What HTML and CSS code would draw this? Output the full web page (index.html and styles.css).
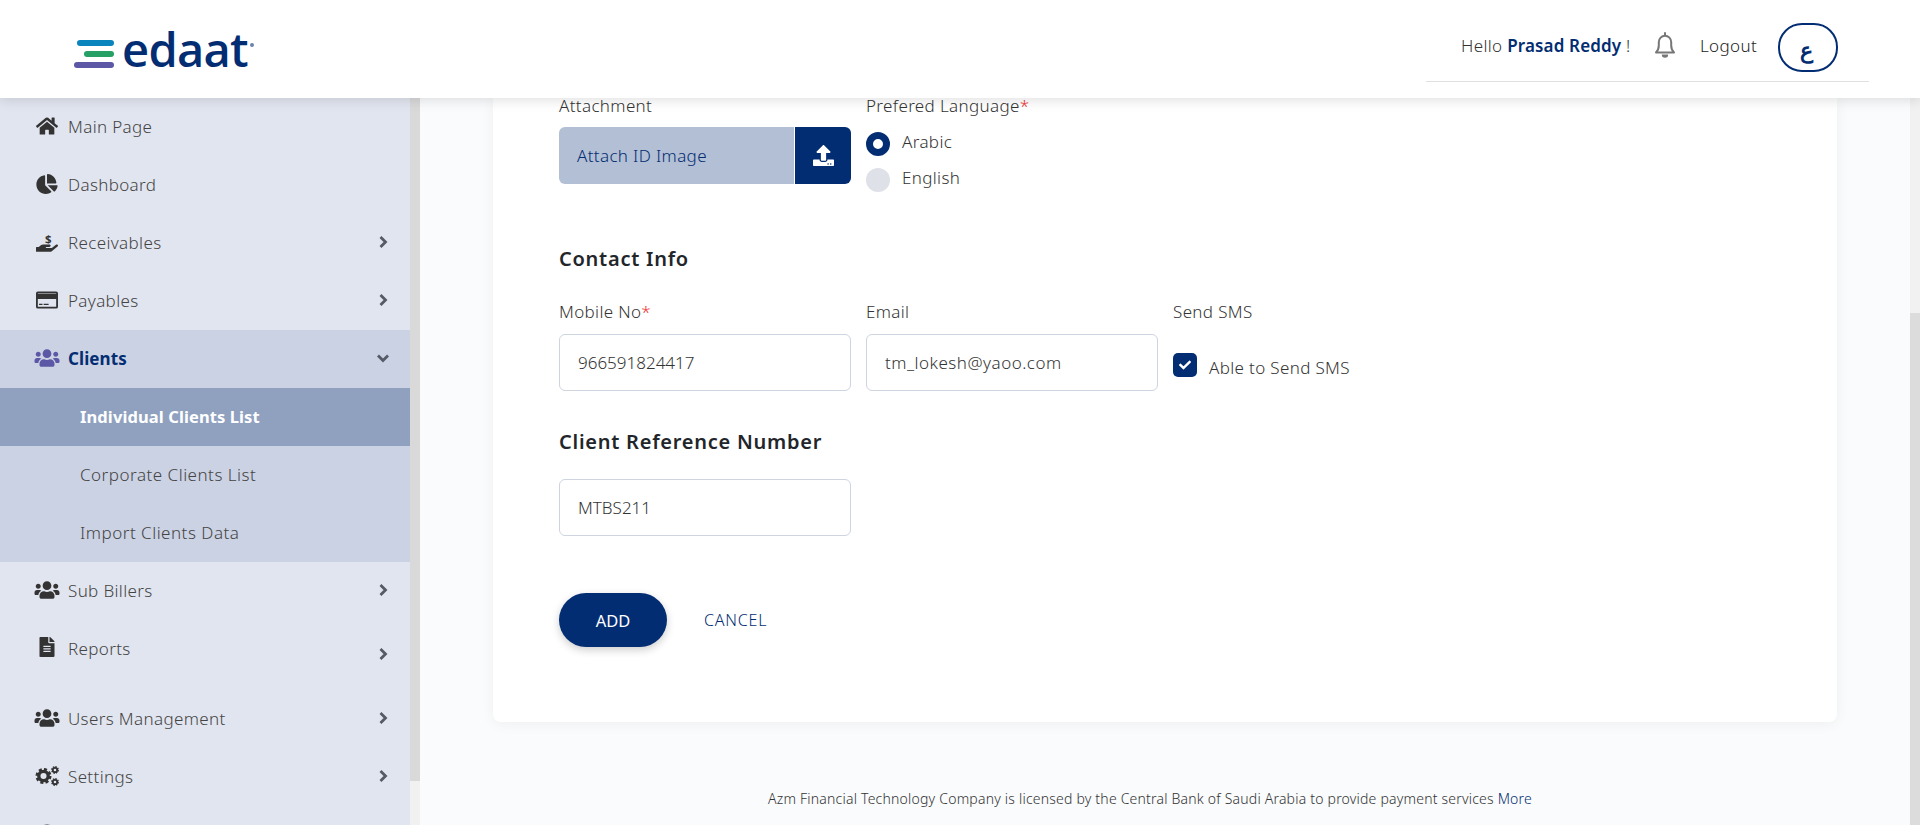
FILE: index.html
```html
<!DOCTYPE html>
<html lang="en">
<head>
<meta charset="utf-8">
<title>edaat</title>
<link rel="stylesheet" href="styles.css">
</head>
<body>
<div class="app">
  <header class="topbar">
    <div class="logo">
      <div class="logo-bars"><i class="bar bar-blue"></i><i class="bar bar-green"></i><i class="bar bar-purple"></i></div>
      <span class="logo-word">edaat</span><i class="logo-dot"></i>
    </div>
    <div class="user-area">
      <span class="hello">Hello <b>Prasad Reddy</b> !</span>
      <svg class="bell" viewBox="0 0 24 26"><path d="M3 20.5c1.8-1.8 2.8-3.4 2.8-7V10a6.2 6.2 0 0 1 12.4 0v3.500c0 3.600 1 5.200 2.800 7z" fill="none" stroke="#777" stroke-width="2" stroke-linejoin="round"/><path d="M12 1v2" stroke="#777" stroke-width="2" stroke-linecap="round"/><path d="M8.800 22.500h6.400a3.200 3.200 0 0 1-6.400 0z" fill="#777"/></svg>
      <span class="logout">Logout</span>
      <button class="lang">ع</button>
    </div>
  </header>
  <div class="body">
    <nav class="sidebar">
      <a class="nav"><svg class="ic" viewBox="0 0 576 512"><path d="M280.37 148.26L96 300.11V464a16 16 0 0 0 16 16l112.06-.29a16 16 0 0 0 15.92-16V368a16 16 0 0 1 16-16h64a16 16 0 0 1 16 16v95.64a16 16 0 0 0 16 16.05L464 480a16 16 0 0 0 16-16V300L295.67 148.26a12.19 12.19 0 0 0-15.3 0zM571.6 251.47L488 182.56V44.05a12 12 0 0 0-12-12h-56a12 12 0 0 0-12 12v72.61L318.47 43a48 48 0 0 0-61 0L4.34 251.47a12 12 0 0 0-1.6 16.9l25.5 31A12 12 0 0 0 45.15 301l235.22-193.74a12.19 12.19 0 0 1 15.3 0L530.9 301a12 12 0 0 0 16.9-1.6l25.5-31a12 12 0 0 0-1.7-16.93z"/></svg><span>Main Page</span></a>
      <a class="nav"><svg class="ic" viewBox="0 0 544 512"><path d="M527.79 288H290.5l158.03 158.03c6.04 6.04 15.98 6.53 22.19.68 38.7-36.46 65.32-85.61 73.13-140.86 1.34-9.46-6.51-17.85-16.06-17.85zm-15.83-64.8C503.72 103.74 408.26 8.28 288.8.04 279.68-.59 272 7.1 272 16.24V240h223.77c9.14 0 16.82-7.68 16.19-16.8zM224 288V50.71c0-9.55-8.39-17.4-17.84-16.06C86.99 51.49-4.1 155.6.14 280.37 4.5 408.51 114.83 513.59 243.03 511.98c50.4-.63 96.97-16.87 135.26-44.03 7.9-5.6 8.42-17.23 1.57-24.08L224 288z"/></svg><span>Dashboard</span></a>
      <a class="nav"><svg class="ic ic-hand" viewBox="0 0 576 512"><path d="M565.3 328.100c-11.800-10.700-30.200-10-42.600 0L430.300 402c-11.300 9.100-25.400 14-40 14H272c-8.800 0-16-7.200-16-16s7.200-16 16-16h78.300c15.900 0 30.700-10.900 33.300-26.600 3.300-20-12.100-37.400-31.600-37.400H192c-27 0-53.100 9.300-74.100 26.300L71.400 384H16c-8.800 0-16 7.200-16 16v96c0 8.800 7.200 16 16 16h356.800c14.500 0 28.600-4.900 40-14l151.200-121c15.200-12.200 16.400-34.800 1.300-48.900z"/><text x="320" y="270" class="dollar">$</text></svg><span>Receivables</span><svg class="chev" viewBox="0 0 10 14"><path d="M2.500 2l5 5-5 5"/></svg></a>
      <a class="nav"><svg class="ic" viewBox="0 0 576 512"><path fill-rule="evenodd" d="M48 32h480a48 48 0 0 1 48 48v352a48 48 0 0 1-48 48H48a48 48 0 0 1-48-48V80a48 48 0 0 1 48-48zM48 72v16h480V72zM48 232v200h480V232zM80 352h90v36H80zM200 352h130v36H200z"/></svg><span>Payables</span><svg class="chev" viewBox="0 0 10 14"><path d="M2.500 2l5 5-5 5"/></svg></a>
      <div class="group">
        <a class="nav nav-open"><svg class="ic ic-users" viewBox="0 0 640 512"><path d="M96 224c35.300 0 64-28.700 64-64s-28.700-64-64-64-64 28.700-64 64 28.700 64 64 64zm448 0c35.300 0 64-28.700 64-64s-28.700-64-64-64-64 28.700-64 64 28.700 64 64 64zm32 32h-64c-17.600 0-33.500 7.100-45.100 18.600 40.300 22.100 68.900 62 75.100 109.400h66c17.700 0 32-14.300 32-32v-32c0-35.300-28.700-64-64-64zm-256 0c61.900 0 112-50.100 112-112S381.900 32 320 32 208 82.100 208 144s50.100 112 112 112zm76.800 32h-8.300c-20.800 10-43.900 16-68.500 16s-47.600-6-68.500-16h-8.300C179.600 288 128 339.600 128 403.200V432c0 26.500 21.500 48 48 48h288c26.500 0 48-21.500 48-48v-28.800c0-63.600-51.600-115.200-115.200-115.200zm-223.700-13.400C161.500 263.100 145.600 256 128 256H64c-35.300 0-64 28.700-64 64v32c0 17.700 14.300 32 32 32h65.900c6.300-47.400 34.900-87.300 75.200-109.400z"/></svg><span>Clients</span><svg class="chev chev-down" viewBox="0 0 14 10"><path d="M2 2.500l5 5 5-5"/></svg></a>
        <a class="sub sub-active">Individual Clients List</a>
        <a class="sub">Corporate Clients List</a>
        <a class="sub">Import Clients Data</a>
      </div>
      <a class="nav"><svg class="ic ic-users" viewBox="0 0 640 512"><path d="M96 224c35.300 0 64-28.700 64-64s-28.700-64-64-64-64 28.700-64 64 28.700 64 64 64zm448 0c35.300 0 64-28.700 64-64s-28.700-64-64-64-64 28.700-64 64 28.700 64 64 64zm32 32h-64c-17.600 0-33.500 7.100-45.100 18.600 40.300 22.100 68.900 62 75.100 109.400h66c17.700 0 32-14.300 32-32v-32c0-35.300-28.700-64-64-64zm-256 0c61.900 0 112-50.100 112-112S381.900 32 320 32 208 82.100 208 144s50.100 112 112 112zm76.800 32h-8.300c-20.800 10-43.900 16-68.500 16s-47.600-6-68.500-16h-8.300C179.600 288 128 339.600 128 403.200V432c0 26.500 21.500 48 48 48h288c26.500 0 48-21.500 48-48v-28.800c0-63.600-51.600-115.200-115.200-115.200zm-223.700-13.400C161.500 263.100 145.600 256 128 256H64c-35.300 0-64 28.700-64 64v32c0 17.700 14.300 32 32 32h65.900c6.300-47.400 34.900-87.300 75.200-109.400z"/></svg><span>Sub Billers</span><svg class="chev" viewBox="0 0 10 14"><path d="M2.500 2l5 5-5 5"/></svg></a>
      <a class="nav nav-tall"><svg class="ic ic-file" viewBox="0 0 384 512"><path d="M224 136V0H24C10.700 0 0 10.700 0 24v464c0 13.300 10.700 24 24 24h336c13.300 0 24-10.700 24-24V160H248c-13.200 0-24-10.800-24-24zm64 236c0 6.600-5.400 12-12 12H108c-6.600 0-12-5.400-12-12v-8c0-6.600 5.400-12 12-12h168c6.600 0 12 5.400 12 12v8zm0-64c0 6.600-5.400 12-12 12H108c-6.600 0-12-5.400-12-12v-8c0-6.600 5.400-12 12-12h168c6.600 0 12 5.400 12 12v8zm0-72v8c0 6.600-5.400 12-12 12H108c-6.600 0-12-5.400-12-12v-8c0-6.600 5.400-12 12-12h168c6.600 0 12 5.400 12 12zm96-114.100v6.100H256V0h6.100c6.400 0 12.500 2.500 17 7l97.900 98c4.500 4.500 7 10.600 7 16.900z"/></svg><span>Reports</span><svg class="chev" viewBox="0 0 10 14"><path d="M2.500 2l5 5-5 5"/></svg></a>
      <a class="nav"><svg class="ic ic-users" viewBox="0 0 640 512"><path d="M96 224c35.300 0 64-28.700 64-64s-28.700-64-64-64-64 28.700-64 64 28.700 64 64 64zm448 0c35.300 0 64-28.700 64-64s-28.700-64-64-64-64 28.700-64 64 28.700 64 64 64zm32 32h-64c-17.600 0-33.500 7.100-45.100 18.600 40.300 22.100 68.900 62 75.100 109.400h66c17.700 0 32-14.300 32-32v-32c0-35.300-28.700-64-64-64zm-256 0c61.900 0 112-50.100 112-112S381.900 32 320 32 208 82.100 208 144s50.100 112 112 112zm76.800 32h-8.300c-20.800 10-43.900 16-68.500 16s-47.600-6-68.500-16h-8.300C179.600 288 128 339.600 128 403.200V432c0 26.500 21.500 48 48 48h288c26.500 0 48-21.500 48-48v-28.800c0-63.600-51.600-115.200-115.200-115.200zm-223.700-13.400C161.500 263.100 145.600 256 128 256H64c-35.300 0-64 28.700-64 64v32c0 17.700 14.300 32 32 32h65.900c6.300-47.400 34.900-87.300 75.200-109.400z"/></svg><span>Users Management</span><svg class="chev" viewBox="0 0 10 14"><path d="M2.500 2l5 5-5 5"/></svg></a>
      <a class="nav"><svg class="ic ic-users" viewBox="0 0 24 20"><circle class="gear-teeth" cx="8.500" cy="10" r="6.300" stroke-width="3.400" stroke-dasharray="2.800 2.100"/><circle class="gear-ring" cx="8.500" cy="10" r="4.700" stroke-width="3.300"/><circle class="gear-ring" cx="20" cy="4" r="2.200" stroke-width="1.800"/><circle class="gear-teeth" cx="20" cy="4" r="3.200" stroke-width="1.400" stroke-dasharray="1.500 1"/><circle class="gear-ring" cx="20" cy="16" r="2.200" stroke-width="1.800"/><circle class="gear-teeth" cx="20" cy="16" r="3.200" stroke-width="1.400" stroke-dasharray="1.500 1"/></svg><span>Settings</span><svg class="chev" viewBox="0 0 10 14"><path d="M2.500 2l5 5-5 5"/></svg></a>
      <a class="nav"><svg class="ic" viewBox="0 0 24 24"><circle cx="12" cy="12" r="10" fill="none" stroke="#333" stroke-width="3"/></svg></a>
    </nav>
    <div class="side-scroll"><i class="side-thumb"></i></div>
    <main class="main">
      <section class="card">
        <div class="row row-top">
          <div class="field">
            <label class="lbl">Attachment</label>
            <div class="attach">
              <span class="attach-text">Attach ID Image</span>
              <span class="attach-btn"><svg class="upload" viewBox="0 0 512 512"><path d="M296 384h-80c-13.300 0-24-10.700-24-24V192h-87.700c-17.800 0-26.700-21.500-14.100-34.100L242.300 5.700c7.500-7.500 19.800-7.500 27.300 0l152.200 152.200c12.600 12.600 3.700 34.100-14.100 34.100H320v168c0 13.300-10.700 24-24 24zm216-8v112c0 13.300-10.700 24-24 24H24c-13.300 0-24-10.700-24-24V376c0-13.300 10.700-24 24-24h136v8c0 30.900 25.100 56 56 56h80c30.900 0 56-25.100 56-56v-8h136c13.300 0 24 10.700 24 24zm-124 88c0-11-9-20-20-20s-20 9-20 20 9 20 20 20 20-9 20-20zm64 0c0-11-9-20-20-20s-20 9-20 20 9 20 20 20 20-9 20-20z"/></svg></span>
            </div>
          </div>
          <div class="field">
            <label class="lbl">Prefered Language<em>*</em></label>
            <div class="radio-row"><i class="radio radio-on"></i><span>Arabic</span></div>
            <div class="radio-row"><i class="radio"></i><span>English</span></div>
          </div>
        </div>
        <h3 class="head head-contact">Contact Info</h3>
        <div class="row">
          <div class="field">
            <label class="lbl lbl-gap">Mobile No<em>*</em></label>
            <input class="input input-tight" value="966591824417">
          </div>
          <div class="field">
            <label class="lbl lbl-gap">Email</label>
            <input class="input input-wide" value="tm_lokesh@yaoo.com">
          </div>
          <div class="field">
            <label class="lbl">Send SMS</label>
            <div class="check-row">
              <i class="check"><svg viewBox="0 0 512 512"><path d="M173.900 439.400l-166.400-166.400c-10-10-10-26.200 0-36.200l36.200-36.200c10-10 26.200-10 36.200 0L192 312.700 432.100 72.600c10-10 26.200-10 36.200 0l36.200 36.200c10 10 10 26.200 0 36.200L210.100 439.400c-10 10-26.200 10-36.200 0z"/></svg></i>
              <span>Able to Send SMS</span>
            </div>
          </div>
        </div>
        <h3 class="head head-ref">Client Reference Number</h3>
        <div class="row">
          <div class="field"><input class="input input-tight" value="MTBS211"></div>
        </div>
        <div class="actions">
          <button class="btn-add">ADD</button>
          <a class="btn-cancel">CANCEL</a>
        </div>
      </section>
      <footer class="foot">Azm Financial Technology Company is licensed by the Central Bank of Saudi Arabia to provide payment services <a>More</a></footer>
    </main>
    <div class="main-scroll"><i class="main-track"></i></div>
  </div>
</div>
</body>
</html>
```
FILE: styles.css
```css
* { box-sizing: border-box; }
html, body { margin: 0; height: 100%; overflow: hidden; }
body { font-family: "Noto Sans", sans-serif; font-weight: 300; font-size: 17px; letter-spacing: .35px; color: #333; }
.app { height: 825px; display: flex; flex-direction: column; background: #fafbfd; }

.topbar { position: relative; z-index: 5; flex: 0 0 98px; height: 98px; background: #fff; box-shadow: 0 2px 12px rgba(0,0,0,.13); display: flex; justify-content: space-between; }
.logo { display: flex; align-items: flex-start; padding: 22px 0 0 74px; }
.logo-bars { width: 40px; margin-top: 18px; display: flex; flex-direction: column; align-items: flex-end; gap: 5px; }
.bar { display: block; height: 6px; border-radius: 3px; }
.bar-blue { width: 37px; background: #0a84bd; }
.bar-green { width: 30px; background: #26a065; }
.bar-purple { width: 40px; background: #5c58a6; }
.logo-word { margin: 1px 0 0 8px; font-family: "Open Sans", sans-serif; font-weight: 600; font-size: 47px; line-height: 52px; letter-spacing: -0.7px; color: #032d72; }
.logo-dot { width: 4px; height: 4px; margin: 21px 0 0 2px; border-radius: 50%; background: #6d83ad; }

.user-area { width: 443px; margin: 0 51px 16px 0; height: 82px; padding: 23px 0 0 35px; border-bottom: 1px solid #e0e0e0; display: flex; align-items: flex-start; }
.hello { line-height: 46px; color: #333; width: 192px; white-space: nowrap; }
.hello b { font-weight: 600; color: #032d72; letter-spacing: .15px; }
.bell { width: 24px; height: 26px; margin-top: 9px; }
.logout { margin-left: 23px; line-height: 46px; color: #222; }
.lang { width: 60px; height: 49px; margin-left: 21px; background: #fff; border: 2.500px solid #032d72; border-radius: 24px; font: 600 22px "Noto Sans", sans-serif; color: #032d72; padding: 2px 3px 0 0; }

.body { flex: 1; min-height: 0; display: flex; }
.sidebar { flex: 0 0 410px; background: #e1e5ef; overflow: hidden; }
.nav { height: 58px; display: flex; align-items: center; padding: 0 22px 2px 36px; color: #444; }
.nav span { flex: 1; margin-left: 10px; }
.nav-tall { height: 70px; padding-bottom: 14px; }
.nav-tall .chev { margin-top: 12px; }
.ic { flex: 0 0 22px; width: 22px; height: 20px; fill: #333; overflow: visible; }
.ic-users { flex-basis: 26px; width: 26px; margin-left: -2px; margin-right: -2px; }
.ic-file { margin-top: -2px; height: 20px; }
.dollar { font: 700 300px "Noto Sans", sans-serif; text-anchor: middle; fill: #333; }
.gear-teeth, .gear-ring { fill: none; stroke: #333; }
.chev { flex: 0 0 10px; width: 10px; height: 14px; fill: none; stroke: #555a66; stroke-width: 2.800; }
.chev-down { flex-basis: 14px; width: 14px; height: 10px; margin-right: -2px; }
.group { background: #cbd2e3; }
.nav-open { color: #032d72; }
.nav-open span { font-weight: 700; letter-spacing: .1px; }
.nav-open .ic { fill: #5c58a6; }
.sub { height: 58px; display: flex; align-items: center; padding: 0 0 2px 80px; color: #444; letter-spacing: .5px; }
.sub-active { background: #8fa1bf; color: #fff; font-weight: 700; font-size: 16.500px; letter-spacing: .1px; }

.side-scroll { flex: 0 0 10px; display: flex; flex-direction: column; background: #f1f1f1; }
.side-thumb { display: block; height: 683px; background: #d9d9d9; }
.main-scroll { flex: 0 0 10px; display: flex; flex-direction: column; background: #dcdcdc; }
.main-track { display: block; height: 215px; background: #f1f1f1; }

.main { flex: 1; min-width: 0; display: flex; flex-direction: column; padding: 0 73px; }
.card { height: 624px; background: #fff; border-radius: 0 0 8px 8px; box-shadow: 0 2px 14px rgba(0,0,0,.05); padding: 0 66px; }
.row { display: grid; grid-template-columns: 292px 292px 292px; column-gap: 15px; }
.row-top { height: 104px; }
.lbl { display: block; line-height: 18px; color: #333; }
.lbl em { font-style: normal; color: #e33; }
.lbl-gap { margin-bottom: 13px; }
.row-top .lbl { margin: -1px 0 12px; height: 18px; }
.attach { height: 57px; display: flex; border-radius: 6px; overflow: hidden; }
.attach-text { flex: 1; background: #b2bfd4; color: #032d72; padding-left: 18px; line-height: 58px; }
.attach-btn { flex: 0 0 56px; background: #032d72; display: flex; align-items: center; justify-content: center; margin-left: 1px; }
.upload { width: 21px; height: 21px; fill: #fff; }
.radio-row { height: 36px; display: flex; align-items: center; gap: 12px; margin-top: -1px; }
.radio-row + .radio-row { margin-top: 0; }
.radio { width: 24px; height: 24px; border-radius: 50%; background: #dee1e7; }
.radio-row span { margin-top: -6px; }
.radio-on { background: #fff; border: 7px solid #032d72; }
.head { margin: 0; font-size: 20px; line-height: 24px; font-weight: 600; color: #22262b; letter-spacing: .75px; }
.head-contact { margin: 45px 0 0; }
.head-ref { margin: 39px 0 0; }
.head-contact + .row { margin-top: 32px; }
.head-ref + .row { margin-top: 25px; }
.input { display: block; width: 100%; height: 57px; padding: 0 18px; border: 1px solid #ced4e0; border-radius: 6px; font: 300 17px "Noto Sans", sans-serif; letter-spacing: .35px; color: #333; background: #fff; }
.input-tight { letter-spacing: 0; }
.input-wide { letter-spacing: .5px; }
.check-row { display: flex; align-items: flex-start; gap: 12px; margin-top: 32px; }
.check { width: 24px; height: 24px; border-radius: 5px; background: #032d72; display: flex; align-items: center; justify-content: center; }
.check svg { width: 12px; height: 12px; fill: #fff; }
.check-row span { line-height: 24px; margin-top: 3px; }
.actions { display: flex; align-items: center; margin-top: 57px; }
.btn-add { width: 108px; height: 54px; border: 0; border-radius: 27px; background: #032d72; color: #fff; font: 400 16.500px "Noto Sans", sans-serif; box-shadow: 0 3px 8px rgba(0,0,0,.2); }
.btn-cancel { margin-left: 37px; color: #032d72; font-size: 16px; letter-spacing: .8px; }
.foot { padding: 68px 30px 0 0; text-align: center; font-size: 14px; letter-spacing: .21px; line-height: 18px; color: #333; white-space: nowrap; }
.foot a { color: #032d72; }
```
